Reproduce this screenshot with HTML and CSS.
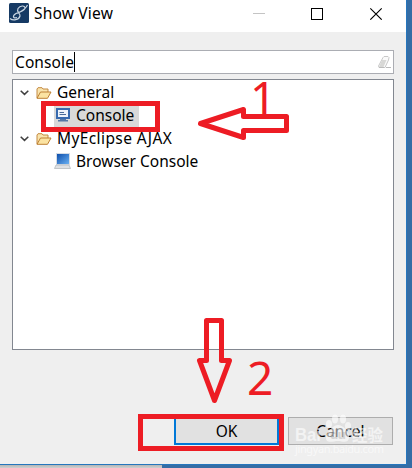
FILE: index.html
```
<!DOCTYPE html>
<html lang="en">
<head>
    <meta charset="UTF-8">
    <meta name="viewport" content="width=device-width, initial-scale=1.0">
    <title>Show View</title>
    <link rel="stylesheet" href="styles.css">
</head>
<body>
    <div class="dialog">
        <header class="titlebar">
            <svg class="app-icon" width="20" height="20" viewBox="0 0 20 20">
                <rect width="20" height="20" rx="1.5" fill="#163a64"/>
                <path d="M1 15.500C4 18 10 17 11 13C11.500 10 7 9 9 5.500C11 2.500 16 2 16 5C16 8 10 9 7 10.500C3 13 4 16 8 14.500M11 9C15 7 17 5 18.500 2" fill="none" stroke="#c9d5e2" stroke-width="1.2"/>
            </svg>
            <h1>Show View</h1>
            <svg class="window-buttons" width="130" height="13" viewBox="0 0 130 13">
                <path d="M0 6.5H12" stroke="#c4c4c4"/>
                <rect x="58.5" y="1.5" width="11" height="11" fill="none" stroke="#000"/>
                <path d="M117.3 1.3L128.7 12.7M128.7 1.3L117.3 12.7" stroke="#000" stroke-width="1.1"/>
            </svg>
        </header>
        <div class="content">
            <div class="search">
                <span class="query">Console</span>
                <svg width="13" height="13" viewBox="0 0 13 13">
                    <path d="M5 1.500L6 .5H10L11 1.500L10.500 4L7 11.500H1L.5 10Z" fill="#fafafa" stroke="#c8c8c8"/>
                    <path d="M4 4H8.500L5.500 11H1Z" fill="#d8d8d6"/>
                    <path d="M1 11.500H6M8 11.500H13" stroke="#bbb"/>
                </svg>
            </div>
            <div class="tree">
                <div class="row">
                    <svg class="chevron" width="9" height="6" viewBox="0 0 9 6"><path d="M.7 .8L4.5 4.4L8.3 .8" fill="none" stroke="#404040" stroke-width="1.5"/></svg>
                    <svg class="folder" width="16" height="12" viewBox="0 0 16 12"><path d="M1 11V2L2 .7H6L7 2H12V5" fill="#f9e4ad" stroke="#c48a43"/><path d="M1 11.3L4.5 5H15L11.5 11.3Z" fill="#fbe3a2" stroke="#bd8034"/></svg>
                    <span class="label">General</span>
                </div>
                <div class="row child">
                    <div class="selected">
                        <svg class="view" width="14" height="14" viewBox="0 0 14 14"><rect x="1" y="1" width="12" height="9" fill="#eef4fb" stroke="#386aae" stroke-width="2"/><path d="M3.5 4.500H8M3.5 6.500H10" stroke="#4a6c9b"/><path d="M4 11H10V12H12V13.5H2V12H4Z" fill="#5478a6"/></svg>
                        <span class="label">Console</span>
                    </div>
                </div>
                <div class="row">
                    <svg class="chevron" width="9" height="6" viewBox="0 0 9 6"><path d="M.7 .8L4.5 4.4L8.3 .8" fill="none" stroke="#404040" stroke-width="1.5"/></svg>
                    <svg class="folder" width="16" height="12" viewBox="0 0 16 12"><path d="M1 11V2L2 .7H6L7 2H12V5" fill="#f9e4ad" stroke="#c48a43"/><path d="M1 11.3L4.5 5H15L11.5 11.3Z" fill="#fbe3a2" stroke="#bd8034"/></svg>
                    <span class="label long">MyEclipse AJAX</span>
                </div>
                <div class="row child">
                    <svg class="browser" width="17" height="16" viewBox="0 0 17 16">
                        <defs><linearGradient id="screen" x1="0" y1="0" x2="1" y2="1"><stop stop-color="#0b4aa8"/><stop offset="1" stop-color="#6cb4f5"/></linearGradient></defs>
                        <rect x="2.500" y=".5" width="13" height="11" fill="url(#screen)" stroke="#d5dce5"/>
                        <path d="M2 12H15L16.5 15.5H.5Z" fill="#dfe1e4" stroke="#aeb3b8" stroke-width=".7"/>
                    </svg>
                    <span class="label">Browser Console</span>
                </div>
            </div>
            <div class="buttons">
                <div class="button primary">OK</div>
                <div class="button cancel">Cancel</div>
            </div>
        </div>
    </div>
    <div class="shadow"></div>

    <svg class="marks" width="412" height="468" viewBox="0 0 412 468">
        <g class="outline">
            <rect x="43.5" y="103.5" width="114" height="26"/>
            <rect x="140.5" y="416.5" width="141" height="32"/>
            <path class="arrow" d="M200.500 123.500L243.500 109.500V116.500H286.500V130.500H243.500V137.500Z"/>
            <path class="arrow" d="M206.500 320.500H221.500V360.500H229.500L214.500 400.500L199.500 360.500H206.500Z"/>
        </g>
        <text class="number" x="250" y="115">1</text>
        <text class="number" x="247" y="395">2</text>
        <g class="watermark">
            <text class="brand" x="295" y="441" textLength="26" lengthAdjust="spacingAndGlyphs">Bai</text>
            <text class="brand cjk" x="352" y="441" textLength="31" lengthAdjust="spacingAndGlyphs">经验</text>
            <ellipse cx="329" cy="424" rx="3" ry="4"/>
            <ellipse cx="335" cy="419" rx="3" ry="4.500"/>
            <ellipse cx="343" cy="419" rx="3" ry="4.500"/>
            <ellipse cx="348" cy="426" rx="3" ry="4"/>
            <path d="M338 425C343 425 350 432 349 438C348 444 342 441 338 441C333 441 326 444 326 438C326 433 333 425 338 425Z"/>
            <text class="paw" x="330" y="439" textLength="16">du</text>
            <text class="site" x="295" y="453" textLength="89">jingyan.baidu.com</text>
        </g>
    </svg>
</body>
</html>
```
FILE: styles.css
```
* {
    box-sizing: border-box;
}

body {
    margin: 0;
    width: 412px;
    height: 468px;
    overflow: hidden;
    background: #356da5;
    font-family: "Noto Sans", "Open Sans", sans-serif;
    font-size: 15.5px;
    color: #000;
}

.dialog {
    width: 407px;
    height: 465px;
    background: #efefef;
    border-right: 1px solid #2676bd;
    border-bottom: 1px solid #2676bd;
}

.titlebar {
    display: flex;
    align-items: center;
    height: 32px;
    padding: 0 23px 6px 9px;
    background: #fff;
}

.titlebar h1 {
    margin: 0 auto 0 5px;
    font-size: 15.5px;
    font-weight: 400;
    line-height: 20px;
    letter-spacing: 0.2px;
}

.content {
    padding: 18px 0 0 12px;
}

.search {
    display: flex;
    align-items: center;
    justify-content: space-between;
    width: 382px;
    height: 24px;
    padding: 0 2px;
    border: 1px solid #abadb3;
    background: #fff;
}

.query {
    height: 20px;
    line-height: 20px;
    letter-spacing: 0.1px;
    border-right: 1px solid #000;
}

.tree {
    width: 382px;
    height: 271px;
    margin-top: 5px;
    padding-top: 1px;
    border: 1px solid #828790;
    background: #fff;
}

.row {
    display: flex;
    align-items: center;
    height: 23px;
    padding-left: 7px;
}

.label {
    padding-bottom: 2px;
}

.long {
    letter-spacing: 0.4px;
}

.folder {
    margin: 0 5px 0 7px;
}

.child {
    padding-left: 41px;
}

.selected {
    display: flex;
    align-items: center;
    width: 85px;
    height: 22px;
    padding-left: 2px;
    background: #d9d9d9;
}

.view {
    margin: 0 6px 2px 0;
}

.browser {
    margin: 0 5px 2px 0;
}

.buttons {
    display: flex;
    gap: 9px;
    padding: 67px 0 0 162px;
}

.button {
    width: 105px;
    height: 28px;
    line-height: 26px;
    text-align: center;
    border: 1px solid #adadad;
    background: #e1e1e1;
}

.primary {
    border: 2px solid #0078d7;
    line-height: 24px;
}

.shadow {
    width: 162px;
    height: 3px;
    background: linear-gradient(#b5b5b5, #d0d0d0);
}

/* hand-drawn notes on top of the dialog */
.marks {
    position: absolute;
    left: 0;
    top: 0;
}

.outline {
    fill: none;
    stroke: #ed1c24;
    stroke-width: 5;
}

.arrow {
    stroke-linejoin: round;
}

.number {
    fill: #ed1c24;
    font-size: 46px;
    font-weight: 400;
}

.watermark {
    fill: #fff;
    opacity: 0.6;
}

.brand {
    font-family: "Liberation Sans", "Noto Sans CJK SC", sans-serif;
    font-size: 19px;
    font-weight: 700;
}

.cjk {
    font-size: 16px;
}

.paw {
    fill: #ccc;
    font-size: 13px;
    font-weight: 700;
}

.site {
    font-size: 11px;
}
```
